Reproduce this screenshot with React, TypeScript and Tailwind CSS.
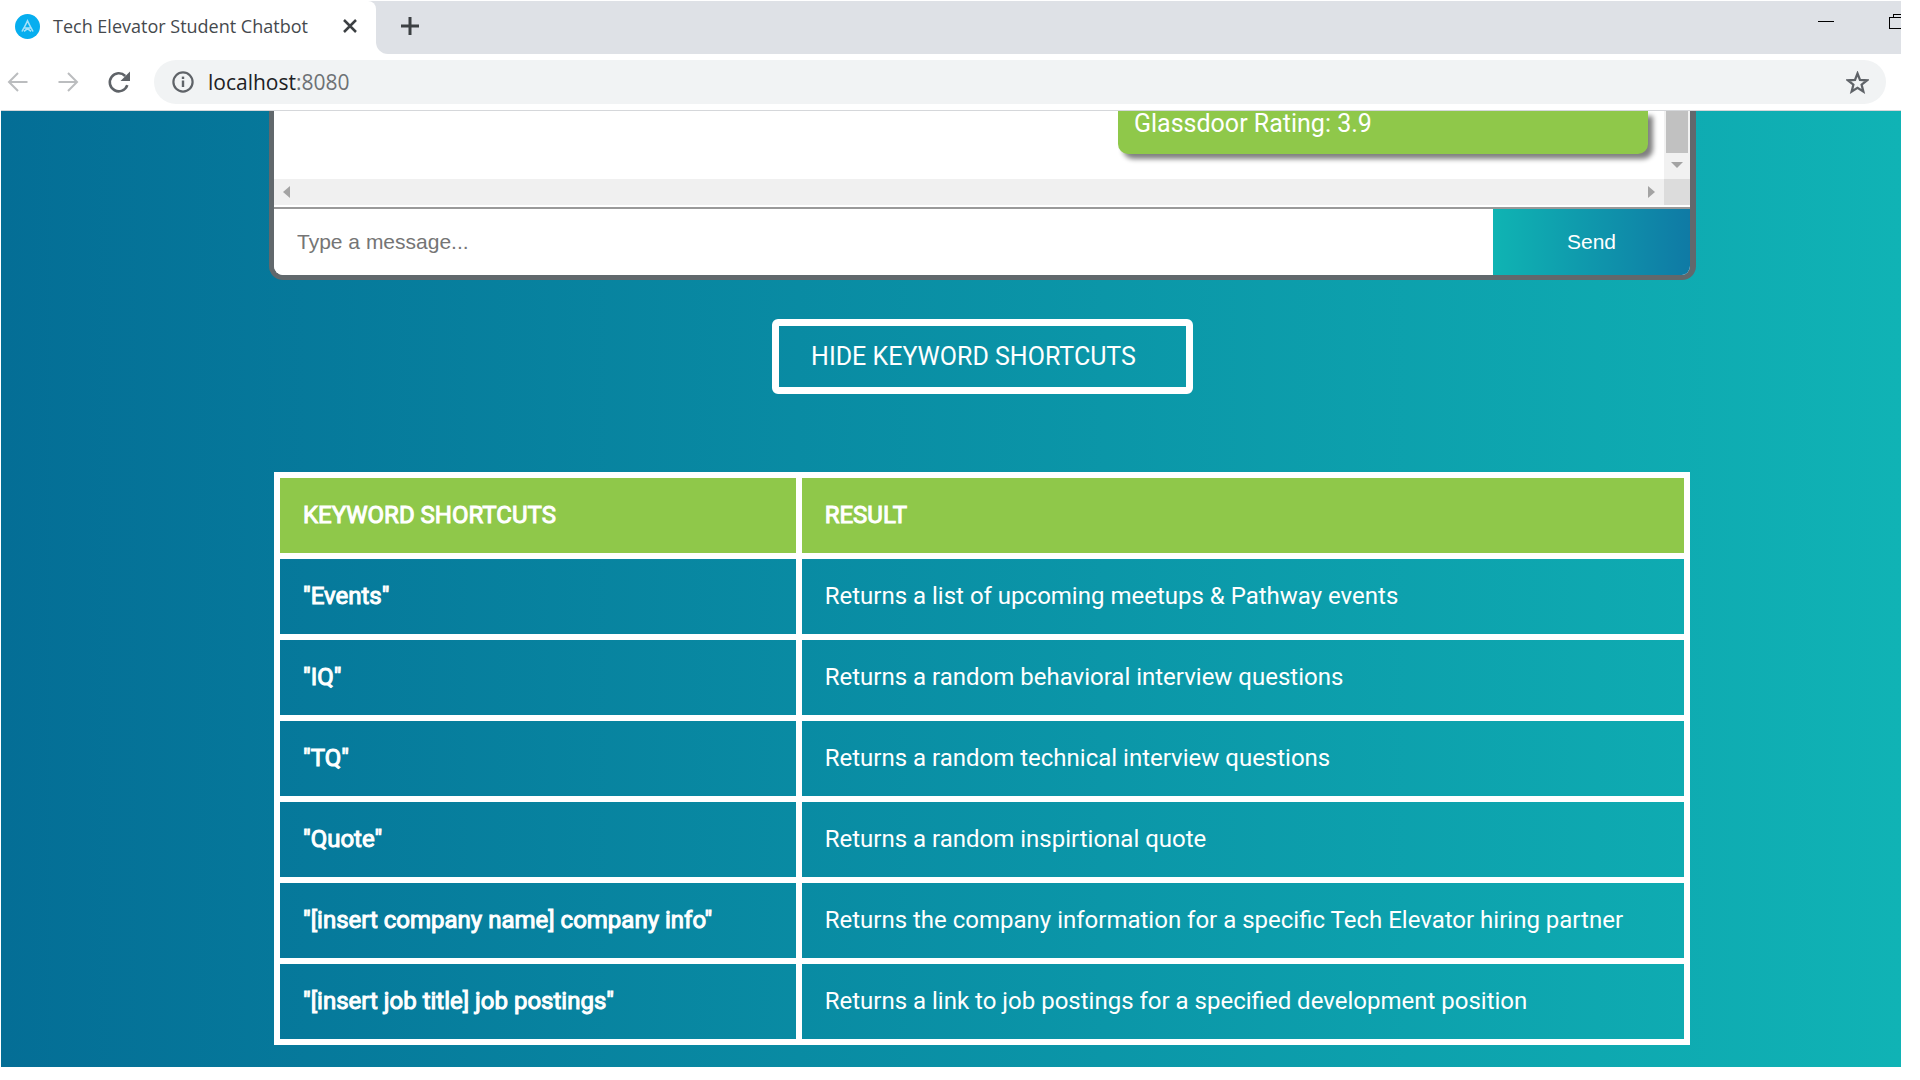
import type { ReactNode } from "react";

const shortcuts = [
  { keyword: '"Events"', result: "Returns a list of upcoming meetups & Pathway events" },
  { keyword: '"IQ"', result: "Returns a random behavioral interview questions" },
  { keyword: '"TQ"', result: "Returns a random technical interview questions" },
  { keyword: '"Quote"', result: "Returns a random inspirtional quote" },
  {
    keyword: '"[insert company name] company info"',
    result: "Returns the company information for a specific Tech Elevator hiring partner",
  },
  {
    keyword: '"[insert job title] job postings"',
    result: "Returns a link to job postings for a specified development position",
  },
];

function IconButton({ label, className, children }: { label: string; className?: string; children: ReactNode }) {
  return (
    <button type="button" aria-label={label} className={`flex shrink-0 items-center justify-center ${className ?? ""}`}>
      {children}
    </button>
  );
}

function TabStrip() {
  return (
    <div className="flex h-[53px] bg-white">
      <div className="w-[375px] shrink-0 bg-[#dee1e6]">
        <div className="flex h-full items-center rounded-tr-lg bg-white pb-[3px] pl-[14px]">
          <svg width="25" height="25" viewBox="0 0 25 25" aria-hidden="true" className="shrink-0">
            <circle cx="12.5" cy="12.5" r="12.5" fill="#06aeef" />
            <path d="M9 14 L12.5 6.8 L16 14 Z M8.8 14 L7 17.5 M16.2 14 L18 17.5 M9 17.3 L12.5 14.6 L16 17.3" fill="none" stroke="#a5e1fa" strokeWidth="1.6" />
          </svg>
          <span className="ml-[13px] w-[274px] whitespace-nowrap font-['Open_Sans','Noto_Sans',sans-serif] text-[18px] leading-6 text-[#45494d]">
            Tech Elevator Student Chatbot
          </span>
          <IconButton label="Close tab" className="ml-4">
            <svg width="14" height="14" viewBox="0 0 14 14" stroke="#3c4043" strokeWidth="2.5">
              <path d="M1 1 L13 13 M13 1 L1 13" />
            </svg>
          </IconButton>
        </div>
      </div>
      <div className="flex min-w-0 flex-1 rounded-bl-xl bg-[#dee1e6]">
        <IconButton label="New tab" className="ml-6 h-[50px] w-5">
          <svg width="20" height="20" viewBox="0 0 20 20" stroke="#3c4043" strokeWidth="3">
            <path d="M10 1 V19 M1 10 H19" />
          </svg>
        </IconButton>
        <div className="ml-auto flex h-[41px] items-center">
          <IconButton label="Minimize" className="mr-[54px]">
            <svg width="17" height="16" viewBox="0 0 17 16" shapeRendering="crispEdges">
              <rect x="0" y="7" width="16" height="1" fill="#000" />
            </svg>
          </IconButton>
          <IconButton label="Restore">
            <svg width="12" height="16" viewBox="0 0 12 16" fill="none" stroke="#000" shapeRendering="crispEdges">
              <path d="M12 3.5 H0.5 V14.5 H12 M4.5 3.5 V0.5 H12" />
            </svg>
          </IconButton>
        </div>
      </div>
    </div>
  );
}

function Toolbar() {
  return (
    <div className="flex h-[57px] items-center border-b border-[#d5d7da] bg-white pr-[15px]">
      <IconButton label="Back" className="ml-[6px]">
        <svg width="21" height="20" viewBox="0 0 21 20" fill="none" stroke="#bbbdbf" strokeWidth="2">
          <path d="M20.5 10 H2 M11 1 L2 10 L11 19" />
        </svg>
      </IconButton>
      <IconButton label="Forward" className="ml-[30px]">
        <svg width="21" height="20" viewBox="0 0 21 20" fill="none" stroke="#bbbdbf" strokeWidth="2">
          <path d="M0.5 10 H19 M10 1 L19 10 L10 19" />
        </svg>
      </IconButton>
      <IconButton label="Reload" className="ml-[28px]">
        <svg width="24" height="24" viewBox="0 0 24 24" fill="none">
          <path d="M20.3 15.2 A9 9 0 1 1 18.2 6" stroke="#5f6368" strokeWidth="2.6" />
          <path d="M23 1.5 V11 H13.5 Z" fill="#5f6368" />
        </svg>
      </IconButton>
      <div className="ml-[23px] flex h-11 min-w-0 flex-1 items-center rounded-full bg-[#f1f3f4] pl-[18px] pr-[17px]">
        <svg width="22" height="22" viewBox="0 0 22 22" aria-hidden="true" className="shrink-0">
          <circle cx="11" cy="11" r="9.6" fill="none" stroke="#5f6368" strokeWidth="2.2" />
          <path d="M11 9.5 V16" stroke="#5f6368" strokeWidth="2.4" />
          <rect x="9.8" y="5.6" width="2.4" height="2.4" fill="#5f6368" />
        </svg>
        <div className="ml-[14px] flex-1 whitespace-nowrap font-['Open_Sans','Noto_Sans',sans-serif] text-[21px] leading-7 text-[#202124]">
          localhost<span className="text-[#6d7175]">:8080</span>
        </div>
        <IconButton label="Bookmark this tab">
          <svg width="23" height="23" viewBox="0 0 24 24" fill="none" stroke="#5f6368" strokeWidth="2.4">
            <path d="M12 2.6 L14.6 9.2 L21.9 9.7 L16.3 14.3 L18.1 21.4 L12 17.5 L5.9 21.4 L7.7 14.3 L2.1 9.7 L9.4 9.2 Z" />
          </svg>
        </IconButton>
      </div>
    </div>
  );
}

function Chat() {
  return (
    <section className="overflow-hidden rounded-b-[14px] border-b-[5px] border-l-[5px] border-r-[6px] border-[#61686c] bg-white">
      <div className="flex h-[68px]">
        <div className="flex min-w-0 flex-1 flex-col items-end justify-end pb-[25px] pr-4">
          <p className="h-[43px] w-[530px] rounded-b-[10px] bg-[#8fc84a] px-4 text-[25px] leading-[25px] text-white shadow-[5px_5px_5px_#808080]">
            Glassdoor Rating: 3.9
          </p>
        </div>
        <div className="flex w-[26px] flex-col items-center bg-[#f1f1f1]">
          <div className="h-[42px] w-[22px] bg-[#c1c1c1]" />
          <svg width="12" height="6" viewBox="0 0 12 6" aria-hidden="true" className="mt-[9px]">
            <path d="M0 0 H12 L6 6 Z" fill="#a3a3a3" />
          </svg>
        </div>
      </div>
      <div className="flex h-[26px]">
        <div className="flex flex-1 items-center justify-between bg-[#f0f0f0] px-[9px]">
          <svg width="7" height="12" viewBox="0 0 7 12" aria-hidden="true">
            <path d="M7 0 V12 L0 6 Z" fill="#a3a3a3" />
          </svg>
          <svg width="7" height="12" viewBox="0 0 7 12" aria-hidden="true">
            <path d="M0 0 V12 L7 6 Z" fill="#a3a3a3" />
          </svg>
        </div>
        <div className="w-[26px] bg-[#dcdcdc]" />
      </div>
      <form className="mt-[2px] flex h-[68px] border-t-2 border-[#999]" onSubmit={(e) => e.preventDefault()}>
        <input
          type="text"
          aria-label="Message"
          placeholder="Type a message..."
          className="min-w-0 flex-1 bg-white px-[23px] font-['Liberation_Sans',sans-serif] text-[21px] text-[#333] outline-none placeholder:text-[#757575]"
        />
        <button
          type="submit"
          className="w-[197px] bg-linear-to-r/srgb from-[#0fb4b3] to-[#0f7aa5] font-['Liberation_Sans',sans-serif] text-[21px] text-white"
        >
          Send
        </button>
      </form>
    </section>
  );
}

function ShortcutTable() {
  return (
    <table className="w-full table-fixed border-collapse text-left text-[24px] leading-[27px] text-white">
      <colgroup>
        <col className="w-[37%]" />
        <col />
      </colgroup>
      <thead>
        <tr className="bg-[#8fc84a]">
          <th className="border-[6px] border-white px-[23px] py-6 font-normal [-webkit-text-stroke:1px_white]">KEYWORD SHORTCUTS</th>
          <th className="border-[6px] border-white px-[23px] py-6 font-normal [-webkit-text-stroke:1px_white]">RESULT</th>
        </tr>
      </thead>
      <tbody>
        {shortcuts.map((s) => (
          <tr key={s.keyword}>
            <th scope="row" className="border-[6px] border-white px-[23px] py-6 font-normal [-webkit-text-stroke:1px_white]">
              {s.keyword}
            </th>
            <td className="border-[6px] border-white px-[23px] py-6">{s.result}</td>
          </tr>
        ))}
      </tbody>
    </table>
  );
}

export default function App() {
  return (
    <div className="bg-white pb-[13px] pl-px pr-[19px] pt-px">
      <header>
        <TabStrip />
        <Toolbar />
      </header>
      <main className="bg-linear-to-r/srgb from-[#046e96] to-[#10b3b5] pb-[22px] pl-[268px] pr-[205px] font-[Roboto,sans-serif]">
        <Chat />
        <div className="mt-[39px] flex justify-center">
          <button
            type="button"
            className="rounded-md border-[7px] border-white py-4 pl-8 pr-[50px] text-[25px] leading-[29px] text-white"
          >
            HIDE KEYWORD SHORTCUTS
          </button>
        </div>
        <div className="mt-[78px] pl-[5px] pr-[6px]">
          <ShortcutTable />
        </div>
      </main>
    </div>
  );
}
